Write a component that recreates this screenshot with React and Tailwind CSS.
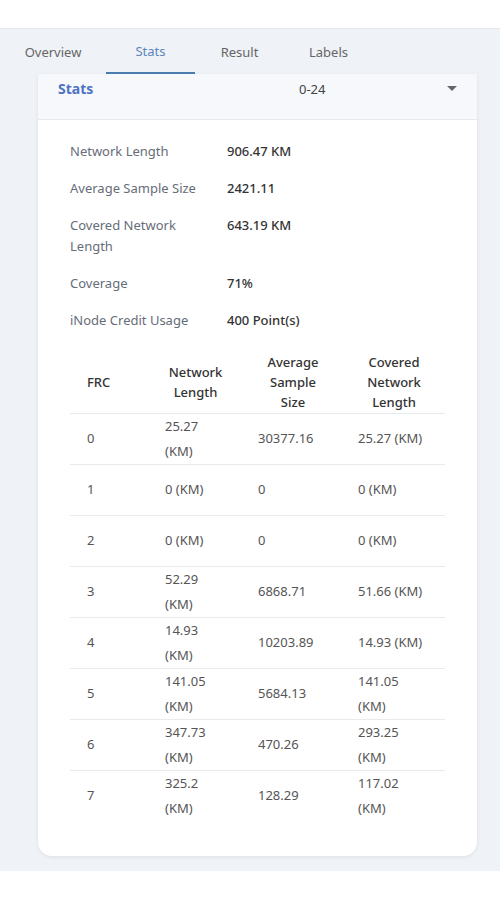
import React from "react";

const kv = [
  ["Network Length", "906.47 KM"],
  ["Average Sample Size", "2421.11"],
  ["Covered Network Length", "643.19 KM"],
  ["Coverage", "71%"],
  ["iNode Credit Usage", "400 Point(s)"],
];

const rows = [
  ["0", "25.27 (KM)", "30377.16", "25.27 (KM)"],
  ["1", "0 (KM)", "0", "0 (KM)"],
  ["2", "0 (KM)", "0", "0 (KM)"],
  ["3", "52.29 (KM)", "6868.71", "51.66 (KM)"],
  ["4", "14.93 (KM)", "10203.89", "14.93 (KM)"],
  ["5", "141.05 (KM)", "5684.13", "141.05 (KM)"],
  ["6", "347.73 (KM)", "470.26", "293.25 (KM)"],
  ["7", "325.2 (KM)", "128.29", "117.02 (KM)"],
];

export default function App() {
  return (
    <div
      className="w-[500px] h-[900px] bg-white flex flex-col"
      style={{ fontFamily: '"Noto Sans", "Open Sans", sans-serif' }}
    >
      <div className="h-[28px] bg-white shrink-0" />
      <div className="bg-[#eff2f6] border-t border-[#e3e7ec] pb-[15px]">
        <div className="flex h-[45px] text-[13px] text-[#666]">
          <div className="w-[106px] h-full flex items-center justify-center pt-[2px]">Overview</div>
          <div className="w-[89px] h-full flex items-center justify-center pt-[2px] text-[#5b86c0] border-b-2 border-[#4a7bb0]">
            Stats
          </div>
          <div className="w-[89px] h-full flex items-center justify-center pt-[2px]">Result</div>
          <div className="w-[89px] h-full flex items-center justify-center pt-[2px]">Labels</div>
        </div>
        <div className="ml-[38px] w-[439px] bg-white rounded-b-[14px] shadow-[0_1px_4px_rgba(0,0,0,0.08)]">
          <div className="h-[46px] bg-[#f6f8fb] border-b border-[#e6e9ee] flex items-start pt-[5px] leading-[20px]">
            <div className="w-[261px] pl-[20px] text-[14px] font-bold text-[#4e73c2]">Stats</div>
            <div className="flex-1 text-[13px] text-[#444]">0-24</div>
            <div className="pr-[20px] pt-[7px]">
              <svg width="10" height="6" viewBox="0 0 10 6" className="block">
                <path d="M0 0 L10 0 L5 5 Z" fill="#666" />
              </svg>
            </div>
          </div>
          <div className="px-[32px] pt-[21px] pb-[35px]">
            <div className="flex flex-col gap-[16px] text-[13px] leading-[21px]">
              {kv.map(([k, v]) => (
                <div key={k} className="flex">
                  <div className="w-[157px] pr-[30px] text-[#666d78]">{k}</div>
                  <div className="font-medium text-[#333]">{v}</div>
                </div>
              ))}
            </div>
            <table className="mt-[21px] w-[375px] table-fixed border-collapse text-[13px]">
              <colgroup>
                <col className="w-[78px]" />
                <col className="w-[95px]" />
                <col className="w-[100px]" />
                <col className="w-[102px]" />
              </colgroup>
              <thead>
                <tr className="border-b border-[#e8eaed] h-[61px] text-[#333] leading-[20px]">
                  <th className="text-left font-medium pl-[17px] align-middle">FRC</th>
                  <th className="font-medium px-[17px] align-middle">Network Length</th>
                  <th className="font-medium px-[15px] align-middle">Average Sample Size</th>
                  <th className="font-medium px-[15px] align-middle">Covered Network Length</th>
                </tr>
              </thead>
              <tbody className="text-[#555] leading-[25px]">
                {rows.map((r, i) => (
                  <tr
                    key={r[0]}
                    className={`h-[51px] ${i < rows.length - 1 ? "border-b border-[#e8eaed]" : ""}`}
                  >
                    <td className="pl-[17px] align-middle">{r[0]}</td>
                    <td className="pl-[17px] pr-[14px] align-middle">{r[1]}</td>
                    <td className="pl-[15px] pr-[12px] align-middle">{r[2]}</td>
                    <td className="pl-[15px] pr-[18px] align-middle">{r[3]}</td>
                  </tr>
                ))}
              </tbody>
            </table>
          </div>
        </div>
      </div>
      <div className="flex-1 bg-white" />
    </div>
  );
}
